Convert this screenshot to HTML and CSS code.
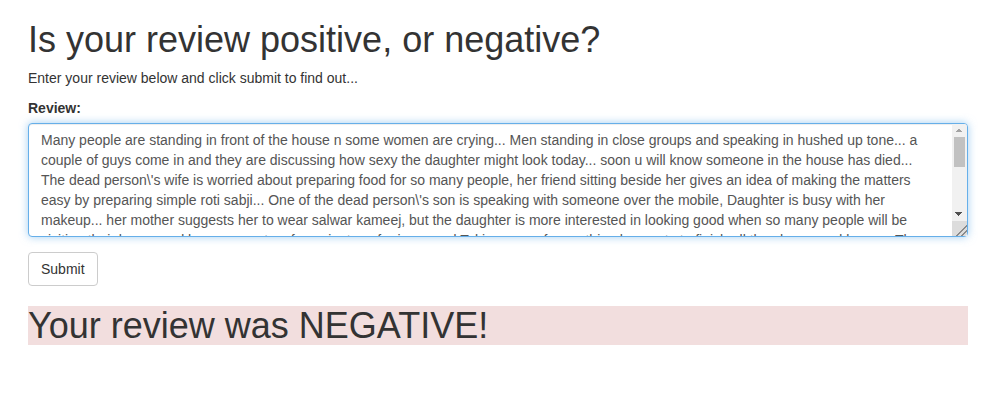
FILE: index.html
```html
<!DOCTYPE html>
<html>
<head>
<meta charset="utf-8">
<title>Review sentiment</title>
<link rel="stylesheet" href="styles.css">
</head>
<body>
<div class="container">
  <h1 class="title">Is your review positive, or negative?</h1>
  <p class="lead-text">Enter your review below and click submit to find out...</p>
  <form class="review-form">
    <div class="form-group">
      <label class="field-label" for="review">Review:</label>
      <div class="textarea-wrap">
        <textarea class="form-control" id="review" rows="5">Many people are standing in front of the house n some women are crying... Men standing in close groups and speaking in hushed up tone... a couple of guys come in and they are discussing how sexy the daughter might look today... soon u will know someone in the house has died... The dead person\'s wife is worried about preparing food for so many people, her friend sitting beside her gives an idea of making the matters easy by preparing simple roti sabji... One of the dead person\'s son is speaking with someone over the mobile, Daughter is busy with her makeup... her mother suggests her to wear salwar kameej, but the daughter is more interested in looking good when so many people will be visiting their house and her son wants a few minutes of privacy and Taking care of everything he wants to finish all the chores and leave... The relatives keep coming in and going out, nobody really seems to care about the dead person... The priest arrives and the rituals begin, but everyone is busy with their own little worlds... The film tries very hard to be a dark comedy but fails to make you laugh even once, the characters are shallow and the dialogues are forced... The performances are average at best and the pace is painfully slow, the second half drags on and on without any purpose... By the time the movie ends you are left wondering what the whole point of it was... A complete waste of time and money, I would not recommend it to anyone...</textarea>
        <div class="fake-scrollbar" aria-hidden="true">
          <div class="sb-btn sb-up"></div>
          <div class="sb-thumb"></div>
          <div class="sb-space"></div>
          <div class="sb-btn sb-down"></div>
          <div class="sb-corner"></div>
        </div>
      </div>
    </div>
    <button type="button" class="btn">Submit</button>
  </form>
  <h1 class="result">Your review was NEGATIVE!</h1>
</div>
</body>
</html>
```
FILE: styles.css
```css
html, body {
  margin: 0;
  padding: 0;
  background: #fff;
}
body {
  font-family: "Liberation Sans", Arial, sans-serif;
  font-size: 14px;
  line-height: 1.42857143;
  color: #333;
}
.container {
  width: 940px;
  margin-left: 28px;
}
.title {
  font-size: 36px;
  font-weight: 500;
  line-height: 1.1;
  margin: 20px 0 8px;
  color: #333;
}
.lead-text {
  margin: 0 0 10px;
}
.review-form {
  margin: 0;
}
.form-group {
  margin-bottom: 15px;
}
.field-label {
  display: inline-block;
  max-width: 100%;
  margin-bottom: 5px;
  font-weight: bold;
}
.textarea-wrap {
  position: relative;
}
.form-control {
  display: block;
  box-sizing: border-box;
  width: 100%;
  height: 114px;
  margin: 0;
  padding: 6px 27px 6px 12px;
  font-family: "Liberation Sans", Arial, sans-serif;
  font-size: 14px;
  line-height: 1.42857143;
  color: #555;
  background: #fff;
  border: 1px solid #66afe9;
  border-radius: 4px;
  outline: 0;
  box-shadow: inset 0 1px 1px rgba(0,0,0,.075), 0 0 8px rgba(102,175,233,.6);
  resize: none;
  overflow: hidden;
  scrollbar-width: none;
}
.form-control::-webkit-scrollbar {
  display: none;
}
.fake-scrollbar {
  position: absolute;
  top: 1px;
  right: 1px;
  bottom: 1px;
  width: 15px;
  display: flex;
  flex-direction: column;
  background: #f1f1f1;
  border-top-right-radius: 3px;
}
.sb-btn {
  height: 14px;
  flex: none;
  background-repeat: no-repeat;
  background-size: 4px 4px;
}
.sb-up {
  height: 13px;
  background-image:
    linear-gradient(to top left, #a3a3a3 50%, transparent 50%),
    linear-gradient(to top right, #a3a3a3 50%, transparent 50%);
  background-position: 3px 4px, 7px 4px;
}
.sb-down {
  background-image:
    linear-gradient(to bottom left, #505050 50%, transparent 50%),
    linear-gradient(to bottom right, #505050 50%, transparent 50%);
  background-position: 3px 5px, 7px 5px;
}
.sb-thumb {
  height: 30px;
  flex: none;
  margin: 0 2px;
  background: #c1c1c1;
}
.sb-space {
  flex: 1;
}
.sb-corner {
  height: 15px;
  flex: none;
  background:
    linear-gradient(135deg, transparent 62%, #8a8a8a 62%, #8a8a8a 68%, transparent 68%, transparent 80%, #8a8a8a 80%, #8a8a8a 86%, transparent 86%),
    #dcdcdc;
  border-bottom-right-radius: 3px;
}
.btn {
  display: inline-block;
  box-sizing: border-box;
  height: 34px;
  padding: 6px 12px;
  font-family: "Liberation Sans", Arial, sans-serif;
  font-size: 14px;
  line-height: 1.42857143;
  color: #333;
  background: #fff;
  border: 1px solid #ccc;
  border-radius: 4px;
  cursor: pointer;
}
.result {
  font-size: 36px;
  font-weight: 500;
  line-height: 1.1;
  margin: 20px 0 10px;
  background: #f2dede;
  color: #333;
}
```
